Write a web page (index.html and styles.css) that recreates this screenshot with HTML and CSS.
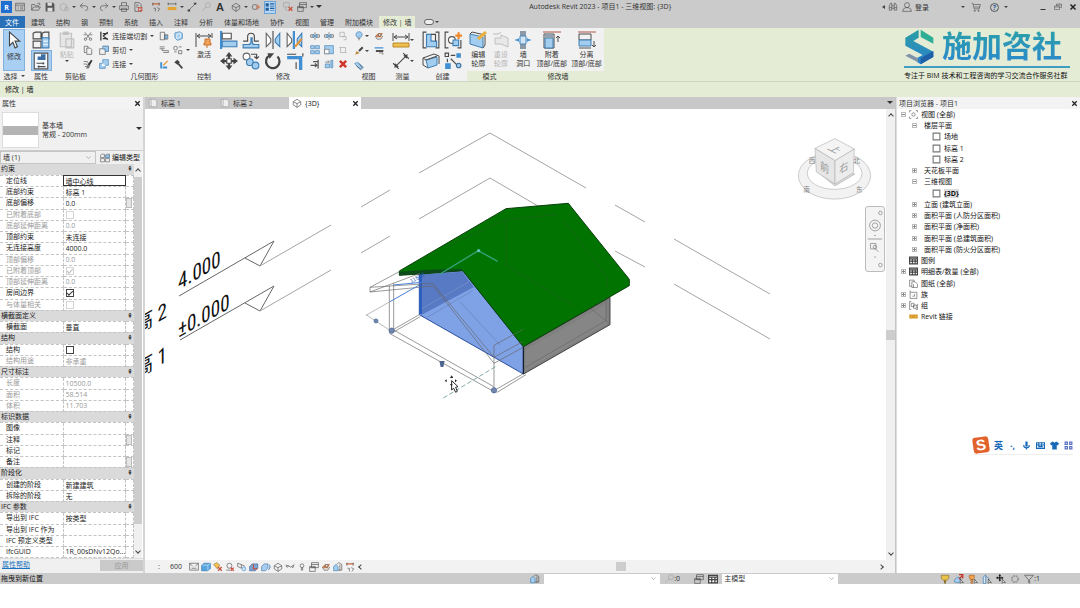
FILE: index.html
```html
<!DOCTYPE html>
<html lang="zh-CN">
<head>
  <meta charset="UTF-8">
  <meta name="viewport" content="width=device-width, initial-scale=1">
  <title>Autodesk Revit 2023 - 项目1 - 三维视图: {3D}</title>
  <link rel="stylesheet" href="styles.css">
</head>
<body>
  <!-- Набор иконок -->
  <svg class="sprite" aria-hidden="true">
    <defs>
      <linearGradient id="roofLogo" x1="0" y1="0" x2="0" y2="1">
        <stop offset="0" stop-color="#2b9fa5"/>
        <stop offset="1" stop-color="#2a80cc"/>
      </linearGradient>
    </defs>
    <symbol id="i-recent" viewBox="0 0 16 16"><path class="k" d="M1 2h14v12H1zM1 5h14M4 8h2M8 8h5M4 11h2M8 11h5"/></symbol>
    <symbol id="i-open" viewBox="0 0 16 16"><path class="k" d="M1 13V4h5l1 2h5v2M1 13l3-5h11l-3 5zM10 2h4v3"/></symbol>
    <symbol id="i-save" viewBox="0 0 16 16"><path fill="#555" d="M1 1h12l2 2v12H1z"/><path fill="#ddd" d="M4 1h7v5H4zM4 9h8v6H4z"/></symbol>
    <symbol id="i-sync" viewBox="0 0 16 16"><path class="g" d="M2 5l5-3 5 3v6l-5 3-5-3z"/><circle class="g" cx="12" cy="11" r="3"/></symbol>
    <symbol id="i-undo" viewBox="0 0 16 16"><path class="k" d="M6 2L2 6l4 4M2 6h8q4 0 4 4 0 3-4 4"/></symbol>
    <symbol id="i-redo" viewBox="0 0 16 16"><path class="k" d="M10 2l4 4-4 4M14 6H6q-4 0-4 4 0 3 4 4"/></symbol>
    <symbol id="i-print" viewBox="0 0 16 16"><path class="k" d="M4 6V1h8v5M1 6h14v6H1zM4 10h8v5H4z"/></symbol>
    <symbol id="i-pdf" viewBox="0 0 16 16"><path class="k" d="M3 1h7l3 3v11H3zM5 5h4M5 8h3"/><path fill="#c8503c" d="M8 8h7v7H8z"/><path stroke="#fff" d="M10 14v-4h3v2h-3"/></symbol>
    <symbol id="i-measure" viewBox="0 0 16 16"><path stroke="#c4643a" stroke-width="2" fill="none" d="M2 3h12"/><path class="k" d="M3 1v5M13 1v5M4 10h3v5M10 9l4 2-3 4"/></symbol>
    <symbol id="i-dim" viewBox="0 0 16 16"><path class="k" d="M1 3h14M2 1v4M14 1v4"/><path fill="#e5a535" d="M1 8h14v5H1z"/></symbol>
    <symbol id="i-line" viewBox="0 0 16 16"><path class="k" d="M3 13L13 3"/><path fill="#444" d="M1 12h4v3H1zM11 1h4v3h-4z"/></symbol>
    <symbol id="i-tag" viewBox="0 0 16 16"><circle class="g" cx="11" cy="5" r="4"/><path class="g" d="M8 8l-6 6"/></symbol>
    <symbol id="i-3d" viewBox="0 0 16 16"><path class="k" d="M2 6l6-4 6 4v5l-6 4-6-4zM2 6l6 3 6-3M8 9v6"/></symbol>
    <symbol id="i-sect" viewBox="0 0 16 16"><circle class="k" cx="6" cy="8" r="4"/><path fill="#c9846c" d="M9 3l6 5-6 5z"/></symbol>
    <symbol id="i-thin" viewBox="0 0 16 16"><path fill="#1e5fa0" d="M1 2h5v5H1zM1 9h5v5H1zM8 2h7v2H8zM8 6h7v1H8zM8 9h7v2H8zM8 13h7v1H8z"/></symbol>
    <symbol id="i-closewin" viewBox="0 0 16 16"><path class="g" d="M1 1h9v7H1zM4 8v5h5"/><path stroke="#c8503c" stroke-width="2" d="M9 8l6 6M15 8l-6 6"/></symbol>
    <symbol id="i-switch" viewBox="0 0 16 16"><path class="k" d="M4 1h11v8H4zM4 4h11M1 7h9v8H1zM1 9h9"/></symbol>
    <symbol id="i-bino" viewBox="0 0 16 16"><path class="k" d="M2 13V7l2-5h2v11zM14 13V7l-2-5h-2v11zM6 6h4M6 10h4M2 9h4M10 9h4"/></symbol>
    <symbol id="i-user" viewBox="0 0 16 16"><circle class="k" cx="8" cy="5" r="4"/><path class="k" d="M1 15q0-5 5-6h4q5 1 5 6z"/></symbol>
    <symbol id="i-cart" viewBox="0 0 16 16"><path class="k" d="M1 2h2l2 9h8l2-7H4M5 8h9"/><circle class="k" cx="6" cy="14" r="1"/><circle class="k" cx="12" cy="14" r="1"/></symbol>
    <symbol id="i-min" viewBox="0 0 16 16"><path stroke="#333" stroke-width="2" d="M3 13h10"/></symbol>
    <symbol id="i-restore" viewBox="0 0 16 16"><path class="k" d="M5 6V2h10v7h-4M1 6h10v7H1zM1 8h10M5 4h10"/></symbol>
    <symbol id="i-x" viewBox="0 0 16 16"><path stroke="#222" stroke-width="3" d="M3 3l10 10M13 3L3 13"/></symbol>
    <symbol id="i-arrow" viewBox="0 0 16 16"><path fill="#fff" stroke="#444" d="M4 1v12l3-3 2 5 2-1-2-5h4z"/></symbol>
    <symbol id="i-types" viewBox="0 0 16 16"><path class="k" d="M1 2l2-1h5v6H1zM9 2l2-1h4v6H9zM1 9h7v6H1z"/><path class="b" d="M9 6h6v9H9z"/><path stroke="#e9f3fb" d="M10 9h4M10 12h4"/></symbol>
    <symbol id="i-props" viewBox="0 0 16 16"><path fill="#f4f9fd" stroke="#555" d="M2 1h12v14H2z"/><path fill="#3d6fa5" d="M8 2h4v5H8zM5 4h3v3H5z"/><path class="k" d="M4 10h7M10 9v2M5 13h7M6 12v2"/></symbol>
    <symbol id="i-paste" viewBox="0 0 16 16"><path fill="#e6e6e6" stroke="#c2c2c2" d="M2 2h10v12H2zM5 1h4v2H5zM7 7h7v8H7z"/></symbol>
    <symbol id="i-cut" viewBox="0 0 16 16"><path class="k" d="M3 2l8 10M13 2L5 12M1 6h4M10 6h5"/><circle class="k" cx="4" cy="13" r="2"/><circle class="k" cx="12" cy="13" r="2"/></symbol>
    <symbol id="i-copyclip" viewBox="0 0 16 16"><path class="k" d="M2 2h6v3M2 2v10h3M6 5h6l2 2v8H6z"/></symbol>
    <symbol id="i-match" viewBox="0 0 16 16"><path class="k" d="M1 4h6l2 4M1 8h5l2 4M3 12h5"/><path stroke="#333" stroke-width="3" d="M14 2l-5 8"/><path fill="#777" d="M7 10h5l-3 5H5z"/></symbol>
    <symbol id="i-cope" viewBox="0 0 16 16"><path stroke="#333" stroke-width="2" fill="none" d="M3 1v14M6 4h8M6 12h8M14 2l-7 6 7 6"/></symbol>
    <symbol id="i-geocut" viewBox="0 0 16 16"><path class="k" fill="#fff" d="M1 6h9v9H1zM6 2h9v8h-5"/><path class="b" d="M6 2h9v8h-5V6H6z"/></symbol>
    <symbol id="i-join" viewBox="0 0 16 16"><path class="b" d="M1 7h5V1h9v9h-5v5H1z"/><path stroke="#fff" stroke-width="2" fill="none" d="M6 7v3h4"/></symbol>
    <symbol id="i-wallcut" viewBox="0 0 16 16"><path class="k" d="M2 2h7v12H2zM9 6h5v7H9z"/><path class="b" d="M10 7h3v5h-3z"/></symbol>
    <symbol id="i-beam" viewBox="0 0 16 16"><path class="k" d="M1 3h8M1 6h8M5 6v3h10v3M7 12h8"/></symbol>
    <symbol id="i-wallb" viewBox="0 0 16 16"><path fill="#3f8fd2" d="M2 5h3v10H2zM6 12h7v3H6z"/><path stroke="#e4953a" stroke-width="2" d="M7 10l7-7"/></symbol>
    <symbol id="i-box" viewBox="0 0 16 16"><path class="b" d="M3 3l8-2 4 3v8l-8 3-4-4z"/><path stroke="#fff" fill="none" d="M6 5l6-1v6l-6 2z"/></symbol>
    <symbol id="i-shapes" viewBox="0 0 16 16"><circle class="k" cx="4" cy="5" r="3"/><path class="k" d="M9 9h5v5H9zM2 11h4M9 3h5"/></symbol>
    <symbol id="i-hammer" viewBox="0 0 16 16"><path fill="#444" d="M2 5l5-4 4 4-4 4z"/><path stroke="#444" stroke-width="3" d="M8 7l7 8"/></symbol>
    <symbol id="i-activate" viewBox="0 0 18 16"><path class="k" d="M1 1v14M17 1v5M2 4h14M5 2L2 4l3 2M13 2l3 2-3 2"/><path fill="#f0a35a" stroke="#c9702a" d="M10 7h5v4h1v2h-7v-2h1zM12 13v3"/></symbol>
    <symbol id="i-align" viewBox="0 0 16 16"><path stroke="#3f8fd2" stroke-width="2" d="M1 0v16"/><path fill="#fff" stroke="#555" d="M2 2h8v5H2z"/><path class="b" d="M2 9h13v5H2z"/></symbol>
    <symbol id="i-offset" viewBox="0 0 16 16"><path class="k" d="M1 9h4V5q0-3 3-3t3 3v4h4"/><path class="b" d="M1 12h5q2 0 2-3V6h1v3q0 3 2 3h4v3H1z"/></symbol>
    <symbol id="i-mirror" viewBox="0 0 16 16"><path class="k" d="M8 0v16"/><path fill="#fff" stroke="#666" d="M2 2l4 5v3l-4 4z"/><path class="b" d="M14 2l-4 5v3l4 4z"/></symbol>
    <symbol id="i-mirror2" viewBox="0 0 16 16"><path stroke="#3f8fd2" stroke-width="2" d="M7 0v16"/><path fill="#fff" stroke="#666" d="M1 2l4 5v3l-4 4z"/><path class="b" d="M14 2l-4 5v3l4 4z"/><path stroke="#e4953a" stroke-width="2" d="M8 14l6-7"/></symbol>
    <symbol id="i-move" viewBox="0 0 16 16"><path stroke="#444" stroke-width="2" d="M8 3v10M3 8h10"/><path fill="#444" d="M8 0l3 4H5zM8 16l3-4H5zM0 8l4-3v6zM16 8l-4-3v6z"/><path fill="#fff" stroke="#444" d="M6 6h4v4H6z"/></symbol>
    <symbol id="i-copy" viewBox="0 0 16 16"><circle cx="4" cy="4" r="3" fill="#fff" stroke="#666"/><circle class="b" cx="7" cy="9" r="3"/><circle class="b" cx="12" cy="12" r="3"/><path class="k" d="M8 2h5v4M11 4l2 2 2-2"/></symbol>
    <symbol id="i-rotate" viewBox="0 0 16 16"><path stroke="#444" stroke-width="2" fill="none" d="M5 3a6 6 0 1 0 7 1"/><path fill="#444" d="M3 1l6 0-4 5z"/></symbol>
    <symbol id="i-trim" viewBox="0 0 16 16"><path stroke="#3f8fd2" stroke-width="3" fill="none" d="M1 5h12v11"/><path class="k" d="M1 2h8M9 9v6M15 1v3"/></symbol>
    <symbol id="i-split" viewBox="0 0 16 16"><path class="k" d="M1 6h4v4H1zM15 6h-4v4h4zM8 2v12"/><path class="b" d="M5 5l3 3-3 3zM11 5L8 8l3 3z"/></symbol>
    <symbol id="i-array" viewBox="0 0 16 16"><path class="b" d="M1 1h6v5H1zM9 1h6v5H9zM1 9h6v5H1zM9 9h6v5H9z"/></symbol>
    <symbol id="i-scale" viewBox="0 0 16 16"><path class="b" d="M1 1h14v13H1z"/><path fill="#fff" stroke="#666" d="M1 7h7v7H1z"/></symbol>
    <symbol id="i-ext" viewBox="0 0 16 16"><path stroke="#555" stroke-width="2" fill="none" d="M13 1v14M1 10h10M8 7l3 3-3 3M5 4h8"/></symbol>
    <symbol id="i-ext2" viewBox="0 0 16 16"><path class="b" d="M2 8h7v6H2zM11 2h3v12h-3z"/><path class="k" d="M2 5h7M6 2l3 3"/></symbol>
    <symbol id="i-pin" viewBox="0 0 16 16"><path class="g" d="M3 2h7v7H3zM7 9h6v5H9"/></symbol>
    <symbol id="i-unpin" viewBox="0 0 16 16"><path class="g" d="M4 4h8v8H4zM2 4h2M12 12h2"/></symbol>
    <symbol id="i-del" viewBox="0 0 16 16"><path stroke="#d2372c" stroke-width="4" d="M3 3l10 10M13 3L3 13"/></symbol>
    <symbol id="i-bulb" viewBox="0 0 16 16"><path class="b" d="M8 1a5 5 0 0 1 3 9H5a5 5 0 0 1 3-9z"/><path class="k" d="M6 12h4M7 14h2"/></symbol>
    <symbol id="i-brush" viewBox="0 0 16 16"><path stroke="#444" stroke-width="3" d="M14 2L8 8"/><path fill="#b98a3c" d="M2 14l2-6 5 3z"/></symbol>
    <symbol id="i-hide" viewBox="0 0 16 16"><path class="b" d="M1 4l5-2 9 8-5 4z"/><path class="k" d="M4 8l8 6M8 4l6 8"/></symbol>
    <symbol id="i-override" viewBox="0 0 16 16"><path fill="#c77b4a" d="M2 8l5-5h7l-3 7H5z"/><circle cx="9" cy="6" r="2" fill="#eee" stroke="#555"/><path class="k" d="M2 8l3 5h6l3-5"/></symbol>
    <symbol id="i-lw" viewBox="0 0 16 16"><path stroke="#3f8fd2" stroke-width="2" d="M1 3h14"/><path stroke="#444" stroke-width="3" d="M3 8h12"/><path class="k" d="M8 11h6v3"/></symbol>
    <symbol id="i-mdist" viewBox="0 0 18 16"><path class="k" d="M1 1v8M17 1v8M2 5h14M5 3L2 5l3 2M13 3l3 2-3 2"/><path fill="#f0c04c" stroke="#b98a2c" d="M1 11h16v4H1z"/></symbol>
    <symbol id="i-mline" viewBox="0 0 16 16"><path class="k" d="M3 13L13 3M1 10l5 5M10 1l5 5"/><path fill="#444" d="M2 14l1-4 3 3zM14 2l-4 1 3 3z"/></symbol>
    <symbol id="i-asm" viewBox="0 0 16 16"><path class="k" d="M4 1H1v14h3M12 1h3v14h-3"/><path class="b" d="M4 3h4v6h5v5H4z"/><path class="k" d="M8 3h4v6"/></symbol>
    <symbol id="i-group" viewBox="0 0 16 16"><path class="k" d="M4 1H1v14h3M12 15h3V8"/><circle cx="7" cy="8" r="3" fill="#fff" stroke="#555"/><path class="b" d="M8 8h5v5H8z"/><path stroke="#ee8a2c" stroke-width="2" d="M10 4h6M13 1v6"/></symbol>
    <symbol id="i-sim" viewBox="0 0 18 16"><path class="k" d="M1 5l11-4 5 2v8M1 5v7l5 3"/><path class="b" d="M4 7l11-3v8L6 15z"/><path class="k" d="M1 5l3 2 11-4"/></symbol>
    <symbol id="i-parts" viewBox="0 0 16 16"><path fill="#3f8fd2" d="M1 10h5v5H1zM11 1h4v4h-4z"/><circle cx="13" cy="12" r="2" fill="#9cc8ec" stroke="#3f6fa0"/><path class="k" d="M1 1h3v3H1zM6 3h4M3 6v3M6 6l5 5"/></symbol>
    <symbol id="i-profile" viewBox="0 0 18 18"><path class="b" d="M1 3l13 3v11L1 13z"/><path class="k" d="M1 3l2-2 13 3v10l-2 3"/><path stroke="#e8b13f" stroke-width="3" d="M9 8l8-7"/></symbol>
    <symbol id="i-reset" viewBox="0 0 18 18"><path fill="#e8e8e8" stroke="#c0c0c0" d="M3 7h6V4l7 3v9l-7-3H3zM1 3h6l2-2"/></symbol>
    <symbol id="i-opening" viewBox="0 0 16 18"><path fill="#8a9aa8" d="M5 0h6v5H5zM5 13h6v5H5z"/><path fill="#cfe4f5" stroke="#4d86b8" d="M5 5h6v8H5z"/><path stroke="#3f8fd2" d="M0 9h4M12 9h4"/><path fill="#3f8fd2" d="M1 9l3-2v4zM15 9l-3-2v4z"/></symbol>
    <symbol id="i-attach" viewBox="0 0 18 18"><path stroke="#b0554c" stroke-width="1" d="M0 1h18"/><path class="k" d="M1 3h10v14H1z"/><path class="b" d="M2 7h8v10H2z"/><path fill="#8fa0ae" d="M2 3h8v4H2z"/><path class="k" d="M15 11V5M13 7l2-2 2 2"/></symbol>
    <symbol id="i-detach" viewBox="0 0 18 18"><path stroke="#b0554c" stroke-width="1" d="M0 1h18"/><path class="k" d="M1 3h12v6H1z"/><path class="b" d="M1 9h12v6H1z"/><path stroke="#555" d="M1 17h12"/><path class="k" d="M16 10v6M14 14l2 2 2-2"/></symbol>
    <symbol id="i-sheet" viewBox="0 0 16 16"><path fill="#eee" stroke="#999" d="M2 2h9l3 3v9H2zM5 2v12"/></symbol>
    <symbol id="i-edittype" viewBox="0 0 18 16"><path class="k" d="M1 3l2-2h5v6H1zM10 3l2-2h5v6h-7zM1 9h7v6H1zM10 9h7v6h-7z"/><path class="b" d="M10 3h7v4h-7z"/></symbol>
    <symbol id="i-views" viewBox="0 0 16 16"><path class="k" d="M4 1H1v3M12 1h3v3M4 15H1v-3M12 15h3v-3"/><circle class="k" cx="8" cy="8" r="3"/></symbol>
    <symbol id="i-view" viewBox="0 0 16 16"><path fill="#fff" stroke="#777" stroke-width="2" d="M2 2h12v12H2z"/></symbol>
    <symbol id="i-table" viewBox="0 0 16 16"><path stroke="#444" stroke-width="2" fill="#fff" d="M1 2h14v12H1zM1 5h14M1 9h14M6 5v9M11 5v9"/></symbol>
    <symbol id="i-sheets" viewBox="0 0 16 16"><path class="k" d="M1 2h8v3M1 2v11h4M5 5h6l4 4v6H5zM8 9v6"/></symbol>
    <symbol id="i-family" viewBox="0 0 16 16"><path class="k" d="M2 1v14h12V4M2 4h12M6 11h4V7"/></symbol>
    <symbol id="i-groups" viewBox="0 0 16 16"><path class="k" d="M4 1H1v14h3M12 15h3V5M4 4h5v6H4zM8 7h5v6H8z"/></symbol>
    <symbol id="i-link" viewBox="0 0 16 16"><path stroke="#d79a2b" stroke-width="3" fill="#f6d88a" d="M2 6h5v4H2zM9 6h5v4H9z"/></symbol>
    <symbol id="i-detail" viewBox="0 0 16 16"><path class="k" d="M1 2h14v11H1zM1 2l5 5M15 2l-5 5M4 10h8"/></symbol>
    <symbol id="i-vstyle" viewBox="0 0 16 16"><path fill="#58a6e0" stroke="#2d6fa8" d="M1 5l4-3h10v8l-4 4H1z"/><path stroke="#cfe8fa" fill="none" d="M1 5h10v9M11 5l4-3"/></symbol>
    <symbol id="i-sun" viewBox="0 0 16 16"><path fill="#f3c14c" stroke="#8a7a4a" d="M1 4l5-3 5 4-4 6z"/><path stroke="#c8503c" stroke-width="2" d="M8 8l6 6M14 8l-6 6"/></symbol>
    <symbol id="i-shadow" viewBox="0 0 16 16"><circle class="k" cx="7" cy="6" r="4"/><path class="k" d="M2 13h6"/><path stroke="#c8503c" stroke-width="2" d="M9 9l5 5M14 9l-5 5"/></symbol>
    <symbol id="i-crop" viewBox="0 0 16 16"><path class="k" d="M1 2l6 2v6l-6-3zM7 4l6 3"/><circle cx="11" cy="11" r="3" fill="#cfe4f5" stroke="#3f8fd2"/></symbol>
    <symbol id="i-crop2" viewBox="0 0 16 16"><path fill="#7aa5d8" stroke="#3b5f92" d="M1 7l4-4h9v7l-4 4H1z"/><path fill="none" stroke="#c8503c" stroke-width="2" d="M7 4v7h6"/></symbol>
    <symbol id="i-crop3" viewBox="0 0 16 16"><path fill="#a8cdf0" stroke="#3b6fa8" d="M1 7l4-4h6v7l-4 4H1zM13 4l2 4-3 5"/></symbol>
    <symbol id="i-glasses" viewBox="0 0 16 16"><path class="k" d="M1 5l5 1q2 4 5 1l4-3M6 6q-3 5-4 0M11 7q2 5 3-2"/></symbol>
    <symbol id="i-bulb2" viewBox="0 0 16 16"><circle class="k" cx="8" cy="6" r="3"/><path class="k" d="M7 9v4h2V9"/></symbol>
    <symbol id="i-worker" viewBox="0 0 16 16"><path fill="#e8c24a" stroke="#8a6d20" d="M2 2h12v5l-3 3H5L2 7z"/><path stroke="#8a6d20" stroke-width="3" d="M8 10v5"/></symbol>
    <symbol id="i-sel1" viewBox="0 0 16 16"><path class="b" d="M1 9l5-4 5 1v6l-5 2-5-1z"/><path stroke="#c8372c" stroke-width="2" fill="none" d="M8 1h6v6M14 2L8 8"/><path fill="#fff" stroke="#333" d="M10 8v7l2-2 3 1z"/></symbol>
    <symbol id="i-sel2" viewBox="0 0 16 16"><path fill="#f2a14c" stroke="#a85f20" d="M2 2h8v4l-2 3H4L2 6zM5 9h2v6H5z"/><path fill="#fff" stroke="#333" d="M10 8v7l2-2 3 1z"/></symbol>
    <symbol id="i-sel3" viewBox="0 0 16 16"><path fill="#d4e7f7" stroke="#2f6fa8" d="M2 5l4-4v14H2zM6 4l5 3v5"/><path fill="#fff" stroke="#333" d="M10 8v7l2-2 3 1z"/></symbol>
    <symbol id="i-sel4" viewBox="0 0 16 16"><path stroke="#222" stroke-width="2" d="M6 1v10M1 6h10"/><path fill="#222" d="M6 0l2 3H4zM6 12l2-3H4zM0 6l3-2v4zM12 6L9 4v4z"/><path fill="#fff" stroke="#333" d="M10 8v7l2-2 3 1z"/></symbol>
    <symbol id="i-gear" viewBox="0 0 16 16"><circle cx="8" cy="8" r="5" fill="none" stroke="#999" stroke-width="3" stroke-dasharray="3 1"/></symbol>
    <symbol id="i-filter" viewBox="0 0 16 16"><path class="k" d="M1 2h14L9 9v6l-2-2V9z"/></symbol>
    <symbol id="i-workset" viewBox="0 0 16 16"><path class="b" d="M1 7l4-3 3 3v7H1z"/><path class="k" d="M6 4l3-3 5 3v9H8M11 4v10"/></symbol>
    <symbol id="i-mic" viewBox="0 0 16 16"><path fill="#1668b8" d="M6 1h4v9H6z"/><path stroke="#1668b8" stroke-width="2" fill="none" d="M3 7q0 5 5 5t5-5M8 12v3"/></symbol>
    <symbol id="i-kbd" viewBox="0 0 16 16"><path stroke="#1668b8" stroke-width="2" fill="#fff" d="M1 3h14v10H1zM1 7h14M5 3v7M10 3v7M4 10h8"/></symbol>
    <symbol id="i-shirt" viewBox="0 0 16 16"><path fill="#1668b8" d="M0 4l5-3 3 2 3-2 5 3-2 4-2-1v8H4V7L2 8z"/></symbol>
    <symbol id="i-apps" viewBox="0 0 16 16"><path fill="#fff" stroke="#5a6fc4" stroke-width="2" d="M2 2h4v4H2zM10 2h4v4h-4zM2 10h4v4H2zM10 10h4v4h-4z"/></symbol>
  </svg>

  <div class="app">
    <!-- Панель быстрого доступа -->
    <header class="titlebar">
      <div class="qat">
        <button class="logo-r" aria-label="Revit">R</button>
        <button class="ic" aria-label="主页"><svg><use href="#i-recent"/></svg></button>
        <button class="ic gap-s" aria-label="打开"><svg><use href="#i-open"/></svg></button>
        <button class="ic" aria-label="保存"><svg><use href="#i-save"/></svg></button>
        <button class="ic" aria-label="同步"><svg><use href="#i-sync"/></svg></button>
        <i class="car"></i>
        <button class="ic" aria-label="放弃"><svg><use href="#i-undo"/></svg></button>
        <i class="car"></i>
        <button class="ic" aria-label="重做"><svg><use href="#i-redo"/></svg></button>
        <i class="car"></i>
        <button class="ic" aria-label="打印"><svg><use href="#i-print"/></svg></button>
        <button class="ic" aria-label="PDF"><svg><use href="#i-pdf"/></svg></button>
        <button class="ic gap-m" aria-label="测量"><svg><use href="#i-measure"/></svg></button>
        <button class="ic gap-s" aria-label="尺寸标注"><svg><use href="#i-dim"/></svg></button>
        <i class="car"></i>
        <button class="ic" aria-label="详图线"><svg><use href="#i-line"/></svg></button>
        <button class="ic" aria-label="标记"><svg><use href="#i-tag"/></svg></button>
        <button class="ic letter" aria-label="文字">A</button>
        <button class="ic gap-s" aria-label="三维视图"><svg><use href="#i-3d"/></svg></button>
        <i class="car"></i>
        <button class="ic" aria-label="剖面"><svg><use href="#i-sect"/></svg></button>
        <button class="ic on" aria-label="细线"><svg><use href="#i-thin"/></svg></button>
        <button class="ic gap-m" aria-label="关闭非活动视图"><svg><use href="#i-closewin"/></svg></button>
        <button class="ic" aria-label="切换窗口"><svg><use href="#i-switch"/></svg></button>
        <i class="car"></i>
        <i class="car big"></i>
      </div>
      <div class="caption">Autodesk Revit 2023 - 项目1 - 三维视图: {3D}</div>
      <div class="account">
        <i class="car left"></i>
        <button class="ic" aria-label="搜索"><svg><use href="#i-bino"/></svg></button>
        <button class="ic" aria-label="用户"><svg><use href="#i-user"/></svg></button>
        <button class="login">登录</button>
        <i class="car"></i>
        <button class="ic" aria-label="商店"><svg><use href="#i-cart"/></svg></button>
        <button class="help" aria-label="帮助">?</button>
        <i class="car"></i>
      </div>
      <div class="winbtns">
        <button class="ic" aria-label="最小化"><svg><use href="#i-min"/></svg></button>
        <button class="ic" aria-label="还原"><svg><use href="#i-restore"/></svg></button>
        <button class="ic" aria-label="关闭"><svg><use href="#i-x"/></svg></button>
      </div>
    </header>

    <nav class="menu">
      <button class="file">文件</button>
      <button>建筑</button>
      <button>结构</button>
      <button>钢</button>
      <button>预制</button>
      <button>系统</button>
      <button>插入</button>
      <button>注释</button>
      <button>分析</button>
      <button>体量和场地</button>
      <button>协作</button>
      <button>视图</button>
      <button>管理</button>
      <button>附加模块</button>
      <button class="active">修改 | 墙</button>
      <button class="pill" aria-label="最小化功能区"></button>
      <i class="car"></i>
    </nav>

    <!-- Лента -->
    <section class="ribbon">
      <div class="panel p-select">
        <div class="tools"><button class="big on tall"><svg class="l"><use href="#i-arrow"/></svg><span>修改</span></button></div>
        <div class="pname">选择 <i class="car"></i></div>
      </div>
      <div class="panel p-props">
        <div class="tools g2">
          <button aria-label="类型属性"><svg class="l"><use href="#i-types"/></svg></button>
          <button class="on" aria-label="属性"><svg class="l"><use href="#i-props"/></svg></button>
        </div>
        <div class="pname">属性</div>
      </div>
      <div class="panel p-clip">
        <div class="tools">
          <button class="big off"><svg class="l"><use href="#i-paste"/></svg><span>粘贴</span><i class="car"></i></button>
          <div class="g3">
            <button aria-label="剪切到剪贴板"><svg class="s"><use href="#i-cut"/></svg></button>
            <button aria-label="复制到剪贴板"><svg class="s"><use href="#i-copyclip"/></svg></button>
            <button aria-label="匹配类型"><svg class="s"><use href="#i-match"/></svg></button>
          </div>
        </div>
        <div class="pname">剪贴板</div>
      </div>
      <div class="panel p-geo">
        <div class="tools">
          <div class="g3">
            <button><svg class="s"><use href="#i-cope"/></svg>连接端切割<i class="car"></i></button>
            <button><svg class="s"><use href="#i-geocut"/></svg>剪切<i class="car"></i></button>
            <button><svg class="s"><use href="#i-join"/></svg>连接<i class="car"></i></button>
          </div>
          <div class="g3">
            <button aria-label="墙连接"><svg class="s"><use href="#i-wallcut"/></svg></button>
            <button aria-label="梁连接"><svg class="s"><use href="#i-beam"/></svg></button>
            <button aria-label="填色"><svg class="s"><use href="#i-wallb"/></svg></button>
            <button aria-label="拆分面"><svg class="s"><use href="#i-box"/></svg></button>
            <button aria-label="形状"><svg class="s"><use href="#i-shapes"/></svg><i class="car"></i></button>
            <button aria-label="拆除"><svg class="s"><use href="#i-hammer"/></svg></button>
          </div>
        </div>
        <div class="pname">几何图形</div>
      </div>
      <div class="panel p-ctrl">
        <div class="tools"><button class="big"><svg class="l"><use href="#i-activate"/></svg><span>激活</span></button></div>
        <div class="pname">控制</div>
      </div>
      <div class="panel p-modify">
        <div class="tools">
          <div class="g2 wide">
            <button aria-label="对齐"><svg class="l"><use href="#i-align"/></svg></button>
            <button aria-label="移动"><svg class="l"><use href="#i-move"/></svg></button>
            <button aria-label="偏移"><svg class="l"><use href="#i-offset"/></svg></button>
            <button aria-label="复制"><svg class="l"><use href="#i-copy"/></svg></button>
            <button aria-label="镜像拾取轴"><svg class="l"><use href="#i-mirror"/></svg></button>
            <button aria-label="旋转"><svg class="l"><use href="#i-rotate"/></svg></button>
            <button aria-label="镜像绘制轴"><svg class="l"><use href="#i-mirror2"/></svg></button>
            <button aria-label="修剪"><svg class="l"><use href="#i-trim"/></svg></button>
          </div>
          <div class="g3 wide">
            <button aria-label="拆分图元"><svg class="s"><use href="#i-split"/></svg></button>
            <button aria-label="阵列"><svg class="s"><use href="#i-array"/></svg></button>
            <button aria-label="延伸单个"><svg class="s"><use href="#i-ext"/></svg></button>
            <button aria-label="用间隙拆分"><svg class="s"><use href="#i-split"/></svg></button>
            <button aria-label="缩放"><svg class="s"><use href="#i-scale"/></svg></button>
            <button aria-label="延伸多个"><svg class="s"><use href="#i-ext2"/></svg></button>
            <button aria-label="解锁"><svg class="s"><use href="#i-pin"/></svg></button>
            <button aria-label="锁定"><svg class="s"><use href="#i-unpin"/></svg></button>
            <button aria-label="删除"><svg class="s"><use href="#i-del"/></svg></button>
          </div>
        </div>
        <div class="pname">修改</div>
      </div>
      <div class="panel p-view">
        <div class="tools">
          <div class="g3 wide">
            <button aria-label="隐藏"><svg class="s"><use href="#i-bulb"/></svg><i class="car"></i></button>
            <button aria-label="替换"><svg class="s"><use href="#i-brush"/></svg><i class="car"></i></button>
            <button aria-label="选择框"><svg class="s"><use href="#i-hide"/></svg></button>
            <button aria-label="置换"><svg class="s"><use href="#i-override"/></svg></button>
            <button aria-label="线处理"><svg class="s"><use href="#i-lw"/></svg></button>
          </div>
        </div>
        <div class="pname">视图</div>
      </div>
      <div class="panel p-measure">
        <div class="tools g2">
          <button aria-label="测量"><svg class="l"><use href="#i-mdist"/></svg><i class="car"></i></button>
          <button aria-label="对齐标注"><svg class="l"><use href="#i-mline"/></svg><i class="car"></i></button>
        </div>
        <div class="pname">测量</div>
      </div>
      <div class="panel p-create">
        <div class="tools g2 wide">
          <button aria-label="创建部件"><svg class="l"><use href="#i-asm"/></svg></button>
          <button aria-label="创建类似"><svg class="l"><use href="#i-sim"/></svg></button>
          <button aria-label="创建组"><svg class="l"><use href="#i-group"/></svg></button>
          <button aria-label="创建零件"><svg class="l"><use href="#i-parts"/></svg></button>
        </div>
        <div class="pname">创建</div>
      </div>
      <div class="panel p-mode ctx">
        <div class="tools">
          <button class="big"><svg class="l"><use href="#i-profile"/></svg><span>编辑<br>轮廓</span></button>
          <button class="big off"><svg class="l"><use href="#i-reset"/></svg><span>重设<br>轮廓</span></button>
        </div>
        <div class="pname">模式</div>
      </div>
      <div class="panel p-wall ctx">
        <div class="tools">
          <button class="big"><svg class="l"><use href="#i-opening"/></svg><span>墙<br>洞口</span></button>
          <button class="big"><svg class="l"><use href="#i-attach"/></svg><span>附着<br>顶部/底部</span></button>
          <button class="big"><svg class="l"><use href="#i-detach"/></svg><span>分离<br>顶部/底部</span></button>
        </div>
        <div class="pname">修改墙</div>
      </div>
      <div class="brand">
        <div class="brand-top">
          <svg class="brand-mark" viewBox="0 0 90 108">
            <path fill="url(#roofLogo)" d="M44 2v24L28 36l60 32v16L50 106l-10-6V86l16-8L4 50V26z"/>
            <path fill="#2fae96" d="M50 2l38 24v18L50 24z"/>
            <path fill="#1f5fa8" d="M50 88l38-22v18l-38 22z"/>
            <path fill="#7f93a8" d="M4 80l12-6 26 14v12z"/>
          </svg>
          <span>施加咨社</span>
        </div>
        <p>专注于 BIM 技术和工程咨询的学习交流合作服务社群</p>
      </div>
    </section>

    <div class="options">修改 | 墙</div>

    <div class="work">
      <!-- Свойства -->
      <aside class="props">
        <div class="phead">属性<button class="x" aria-label="关闭属性"><svg><use href="#i-x"/></svg></button></div>
        <button class="type">
          <span class="thumb"></span>
          <span class="tname">基本墙<br>常规 - 200mm</span>
          <i class="car big"></i>
        </button>
        <div class="inst">
          <select aria-label="图元"><option>墙 (1)</option></select>
          <button><svg><use href="#i-edittype"/></svg>编辑类型</button>
        </div>
        <div class="grid-wrap">
          <table>
            <colgroup><col class="c1"><col><col class="c3"></colgroup>
            <tbody>
              <tr class="sec"><th colspan="2">约束</th><td>⇞</td></tr>
              <tr><th><label for="p1">定位线</label></th><td><input class="focus" id="p1" value="墙中心线"></td><td></td></tr>
              <tr><th><label for="p2">底部约束</label></th><td><input id="p2" value="标高 1"></td><td></td></tr>
              <tr><th><label for="p3">底部偏移</label></th><td><input id="p3" value="0.0"></td><td><button aria-label="关联底部偏移"></button></td></tr>
              <tr class="dis"><th><label for="p4">已附着底部</label></th><td><input type="checkbox" id="p4" disabled></td><td></td></tr>
              <tr class="dis"><th><label for="p5">底部延伸距离</label></th><td><input id="p5" value="0.0" disabled></td><td></td></tr>
              <tr><th><label for="p6">顶部约束</label></th><td><input id="p6" value="未连接"></td><td></td></tr>
              <tr><th><label for="p7">无连接高度</label></th><td><input id="p7" value="4000.0"></td><td></td></tr>
              <tr class="dis"><th><label for="p8">顶部偏移</label></th><td><input id="p8" value="0.0" disabled></td><td></td></tr>
              <tr class="dis"><th><label for="p9">已附着顶部</label></th><td><input type="checkbox" id="p9" checked disabled></td><td></td></tr>
              <tr class="dis"><th><label for="p10">顶部延伸距离</label></th><td><input id="p10" value="0.0" disabled></td><td></td></tr>
              <tr><th><label for="p11">房间边界</label></th><td><input type="checkbox" id="p11" checked></td><td></td></tr>
              <tr class="dis"><th><label for="p12">与体量相关</label></th><td><input type="checkbox" id="p12" disabled></td><td></td></tr>
              <tr class="sec"><th colspan="2">横截面定义</th><td>⇞</td></tr>
              <tr><th><label for="p13">横截面</label></th><td><input id="p13" value="垂直"></td><td></td></tr>
              <tr class="sec"><th colspan="2">结构</th><td>⇞</td></tr>
              <tr><th><label for="p14">结构</label></th><td><input type="checkbox" id="p14"></td><td></td></tr>
              <tr class="dis"><th><label for="p15">结构用途</label></th><td><input id="p15" value="非承重" disabled></td><td></td></tr>
              <tr class="sec"><th colspan="2">尺寸标注</th><td>⇞</td></tr>
              <tr class="dis"><th><label for="p16">长度</label></th><td><input id="p16" value="10500.0" disabled></td><td></td></tr>
              <tr class="dis"><th><label for="p17">面积</label></th><td><input id="p17" value="58.514" disabled></td><td></td></tr>
              <tr class="dis"><th><label for="p18">体积</label></th><td><input id="p18" value="11.703" disabled></td><td></td></tr>
              <tr class="sec"><th colspan="2">标识数据</th><td>⇞</td></tr>
              <tr><th><label for="p19">图像</label></th><td><input id="p19"></td><td></td></tr>
              <tr><th><label for="p20">注释</label></th><td><input id="p20"></td><td><button aria-label="关联注释"></button></td></tr>
              <tr><th><label for="p21">标记</label></th><td><input id="p21"></td><td></td></tr>
              <tr><th><label for="p22">备注</label></th><td><input id="p22"></td><td><button aria-label="关联备注"></button></td></tr>
              <tr class="sec"><th colspan="2">阶段化</th><td>⇞</td></tr>
              <tr><th><label for="p23">创建的阶段</label></th><td><input id="p23" value="新建建筑"></td><td></td></tr>
              <tr><th><label for="p24">拆除的阶段</label></th><td><input id="p24" value="无"></td><td></td></tr>
              <tr class="sec"><th colspan="2">IFC 参数</th><td>⇞</td></tr>
              <tr><th><label for="p25">导出到 IFC</label></th><td><input id="p25" value="按类型"></td><td></td></tr>
              <tr><th><label for="p26">导出到 IFC 作为</label></th><td><input id="p26"></td><td></td></tr>
              <tr><th><label for="p27">IFC 预定义类型</label></th><td><input id="p27"></td><td></td></tr>
              <tr><th><label for="p28">IfcGUID</label></th><td><input id="p28" value="1R_00sDNv12Qo..."></td><td></td></tr>
            </tbody>
          </table>
          <div class="vbar"><i class="chev up"></i><b></b><i class="chev down"></i></div>
        </div>
        <div class="pfoot"><a href="#">属性帮助</a><button disabled>应用</button></div>
      </aside>

      <!-- Вид -->
      <main class="doc">
        <div class="tabs">
          <button><svg><use href="#i-sheet"/></svg>标高 1</button>
          <button><svg><use href="#i-sheet"/></svg>标高 2</button>
          <button class="active"><svg><use href="#i-3d"/></svg>{3D}<svg class="close"><use href="#i-x"/></svg></button>
          <i class="car big"></i>
        </div>
        <div class="canvas">
          <svg class="scene" viewBox="145 109 741 451">
            <g class="thin">
              <path d="M419 173L490 133l96 55M419 219l71-41 48 28M361 207l29-17M361 253l29-17M615 205l30 17M615 251l30 16M674 239l96 55M674 284l96 55"/>
              <path class="lvl" d="M179 296l95-55-14 25-15-8M180 340l94-54-14 25-15-8"/>
              <path d="M260 266l71-41M260 311l71-41"/>
            </g>
            <g class="levels">
              <text transform="matrix(.866 -.5 0 1 178 290)">4.000</text>
              <text transform="matrix(.866 -.5 0 1 178 338)">±0.000</text>
              <text transform="matrix(.866 -.5 0 1 167 317)" text-anchor="end">高 2</text>
              <text transform="matrix(.866 -.5 0 1 167 361)" text-anchor="end">高 1</text>
            </g>
            <!-- дом, координаты в масштабе 3:1 -->
            <g transform="translate(350 120) scale(.3333)">
              <path fill="#808080" stroke="#444" stroke-width="3" d="M521 680l259-148v82L521 762z"/>
              <path fill="#868686" d="M526 752l242-140v-60L526 690z"/>
              <path class="h" d="M768 540v62l12 12M768 602L526 742M722 566l46 36"/>
              <path fill="#7fa2e6" stroke="#2a4f9e" stroke-width="3" d="M208 460l130-8 182 228v82L208 584z"/>
              <path fill="#5879c4" d="M214 463l122-8 36 46-158 84z"/>
              <path stroke="#2d5fc0" stroke-width="8" d="M212 462v120"/>
              <path stroke="#6f8cc8" stroke-width="3" fill="none" d="M216 566l150-86M232 592l136-80M330 545l120 130"/>
              <path fill="#007300" stroke="#0c3f0c" stroke-width="3" d="M148 453l320-187 187-16 183 228v19L520 680 338 452l-126 10-64 4z"/>
              <path fill="#0d4a1a" d="M148 455v11l64-4 126-10-4-5-100 2z"/>
              <path stroke="#146614" stroke-width="3" fill="none" d="M468 296v140l200 120M290 380l178-82 155-14M640 300l130 170v30"/>
              <path stroke="#37a47c" stroke-width="4" fill="none" d="M270 462l115-70 58 32"/>
              <circle cx="386" cy="392" r="5" fill="#5fc0c0"/>
              <path class="h" d="M148 455L60 502v14l190-18 182 232M60 502l188-12 184 222M60 516l150-56M118 497v130M131 490v138M124 632l84-48M131 636l80-46M118 640l314 175M131 630l300 170M432 676v136M432 676l88-48M432 712l88-48M432 730l88-48M432 812l90-52M440 818l88-54"/>
              <path stroke="#4a7fd6" stroke-width="3" fill="none" d="M131 495l84-8M120 545l88-50"/>
              <path stroke="#7fa8a8" stroke-width="3" stroke-dasharray="14 7" fill="none" d="M280 834l160-96"/>
              <path stroke="#999" stroke-width="2" d="M48 586l72-41M48 584l70 46"/>
              <path fill="#111" stroke="#111" stroke-width="3" d="M520 680v82"/>
              <circle class="grip" cx="78" cy="603" r="6"/>
              <circle class="grip" cx="125" cy="632" r="8"/>
              <circle class="grip" cx="432" cy="811" r="8"/>
              <path fill="#4e6590" d="M268 723h16l-4 18h-8z"/>
              <text class="len" transform="translate(184 490) rotate(-28)">11557</text>
              <!-- курсор -->
              <path fill="#fff" stroke="#222" stroke-width="3" d="M305 782v28l6-5 6 12 5-3-5-12 7-2z"/>
              <path fill="#222" d="M300 774h10l-5-8zM290 778v9l-6-5zM315 778v9l6-5zM300 792h8l-4 6z"/>
            </g>
            <!-- видовой куб -->
            <g class="cube" transform="translate(790 100) scale(.3333)">
              <path fill="#f2f2f2" fill-rule="evenodd" d="M25 227a108 70 0 1 0 217 0a108 70 0 1 0-217 0zM52 220a82 48 0 1 0 164 0a82 48 0 1 0-164 0z"/>
              <path fill="#d8d8d8" stroke="none" d="M90 222l45 36 60-36-60-14z"/>
              <path fill="#f4f4f4" d="M75 145l60-29 58 31-58 35z"/>
              <path fill="#e6e6e6" d="M75 145l60 37v70l-56-36z"/>
              <path fill="#ececec" d="M193 147l-3 71-55 34v-70z"/>
              <text transform="matrix(.9 .45 -.9 .45 110 146)">上</text>
              <text transform="matrix(.86 .5 0 1 90 206)">前</text>
              <text transform="matrix(.86 -.5 0 1 148 222)">右</text>
              <text class="dir" x="56" y="188">西</text>
              <text class="dir" x="190" y="188">北</text>
              <text class="dir" x="40" y="276">南</text>
              <text class="dir" x="198" y="276">东</text>
            </g>
          </svg>
          <div class="navbar">
            <svg viewBox="0 0 20 66">
              <circle cx="16" cy="4" r="2"/>
              <circle cx="10" cy="18" r="6"/>
              <circle cx="10" cy="18" r="3"/>
              <path d="M9 29h2M2 33h16M5 38h6v6H5zM9 43l5 4M9 53h2"/>
              <circle cx="10" cy="42" r="2"/>
              <circle cx="16" cy="62" r="2"/>
            </svg>
          </div>
          <div class="vbar main"><i class="chev up"></i><b></b><i class="chev down"></i></div>
        </div>
        <div class="viewbar">
          <span class="scale">:</span><span>600</span>
          <div class="vicons">
            <button aria-label="详细程度"><svg><use href="#i-detail"/></svg></button>
            <button aria-label="视觉样式"><svg><use href="#i-vstyle"/></svg></button>
            <button aria-label="日光路径"><svg><use href="#i-sun"/></svg></button>
            <button aria-label="阴影"><svg><use href="#i-shadow"/></svg></button>
            <button aria-label="渲染"><svg><use href="#i-crop"/></svg></button>
            <button aria-label="裁剪视图"><svg><use href="#i-crop2"/></svg></button>
            <button aria-label="裁剪区域"><svg><use href="#i-crop3"/></svg></button>
            <button aria-label="锁定视图"><svg><use href="#i-3d"/></svg></button>
            <button aria-label="临时隐藏"><svg><use href="#i-glasses"/></svg></button>
            <button aria-label="显示隐藏"><svg><use href="#i-bulb2"/></svg></button>
            <button aria-label="临时视图"><svg><use href="#i-switch"/></svg></button>
            <button aria-label="分析模型"><svg><use href="#i-override"/></svg></button>
            <button aria-label="置换集"><svg><use href="#i-workset"/></svg></button>
            <button aria-label="约束"><svg><use href="#i-measure"/></svg></button>
          </div>
          <i class="chev left"></i>
          <div class="hbar"><b></b></div>
          <i class="chev right"></i>
        </div>
      </main>

      <!-- Диспетчер проекта -->
      <aside class="browser">
        <div class="phead">项目浏览器 - 项目1<button class="x" aria-label="关闭浏览器"><svg><use href="#i-x"/></svg></button></div>
        <ul class="tree">
          <li><i class="ex m"></i><svg><use href="#i-views"/></svg>视图 (全部)</li>
          <li class="l1"><i class="ex m"></i>楼层平面</li>
          <li class="l2"><svg><use href="#i-view"/></svg>场地</li>
          <li class="l2"><svg><use href="#i-view"/></svg>标高 1</li>
          <li class="l2"><svg><use href="#i-view"/></svg>标高 2</li>
          <li class="l1"><i class="ex"></i>天花板平面</li>
          <li class="l1"><i class="ex m"></i>三维视图</li>
          <li class="l2"><svg><use href="#i-view"/></svg><b>{3D}</b></li>
          <li class="l1"><i class="ex"></i>立面 (建筑立面)</li>
          <li class="l1"><i class="ex"></i>面积平面 (人防分区面积)</li>
          <li class="l1"><i class="ex"></i>面积平面 (净面积)</li>
          <li class="l1"><i class="ex"></i>面积平面 (总建筑面积)</li>
          <li class="l1"><i class="ex"></i>面积平面 (防火分区面积)</li>
          <li><i class="ex none"></i><svg><use href="#i-table"/></svg>图例</li>
          <li><i class="ex"></i><svg><use href="#i-table"/></svg>明细表/数量 (全部)</li>
          <li><i class="ex none"></i><svg><use href="#i-sheets"/></svg>图纸 (全部)</li>
          <li><i class="ex"></i><svg><use href="#i-family"/></svg>族</li>
          <li><i class="ex"></i><svg><use href="#i-groups"/></svg>组</li>
          <li><i class="ex none"></i><svg><use href="#i-link"/></svg>Revit 链接</li>
        </ul>
        <div class="ime">
          <span class="sogou">S</span>
          <button>英</button>
          <button>·,</button>
          <button aria-label="语音"><svg><use href="#i-mic"/></svg></button>
          <button aria-label="键盘"><svg><use href="#i-kbd"/></svg></button>
          <button aria-label="皮肤"><svg><use href="#i-shirt"/></svg></button>
          <button aria-label="工具箱"><svg><use href="#i-apps"/></svg></button>
        </div>
      </aside>
    </div>

    <footer class="status">
      <span class="hint">拖曳到新位置</span>
      <svg><use href="#i-workset"/></svg>
      <select aria-label="工作集"><option></option></select>
      <span class="zero"><svg><use href="#i-tag"/></svg>:0</span>
      <svg><use href="#i-switch"/></svg>
      <svg><use href="#i-table"/></svg>
      <select class="model" aria-label="设计选项"><option>主模型</option></select>
      <div class="sicons">
        <button aria-label="工作共享"><svg><use href="#i-worker"/></svg></button>
        <button aria-label="选择链接"><svg><use href="#i-sel1"/></svg></button>
        <button aria-label="选择基线"><svg><use href="#i-sel2"/></svg></button>
        <button aria-label="选择锁定"><svg><use href="#i-sel3"/></svg></button>
        <button aria-label="拖曳图元"><svg><use href="#i-sel4"/></svg></button>
        <button aria-label="后台进程"><svg><use href="#i-gear"/></svg></button>
        <button aria-label="过滤器"><svg><use href="#i-filter"/></svg>:1</button>
      </div>
    </footer>
  </div>
</body>
</html>
```

FILE: styles.css
```css
* {
  box-sizing: border-box;
}
body {
  margin: 0;
  background: #fff;
  color: #333;
  font: 7px/9px "Open Sans", "Noto Sans CJK SC", sans-serif;
}
button, input, select {
  margin: 0;
  padding: 0;
  border: 0;
  background: none;
  color: inherit;
  font: inherit;
}
button {
  display: flex;
  align-items: center;
  white-space: nowrap;
}
svg {
  display: block;
  flex: none;
  width: 10px;
  height: 10px;
}
.sprite {
  position: absolute;
  width: 0;
  height: 0;
}
.k {
  fill: none;
  stroke: #4a4a4a;
}
.g {
  fill: none;
  stroke: #a0a0a0;
}
.b {
  fill: #a3cdee;
  stroke: #3f7fb5;
}
.app {
  display: flex;
  flex-direction: column;
  min-height: 100vh;
  padding-bottom: 24px;
}

/* маленькие треугольники */
.car {
  flex: none;
  width: 4px;
  height: 2px;
  border: solid transparent;
  border-width: 2px 2px 0;
  border-top-color: #444;
}
.car.big {
  width: 6px;
  height: 3px;
  border-width: 3px 3px 0;
  border-top-color: #333;
}
.car.left {
  width: 3px;
  height: 4px;
  border-width: 2px 3px 2px 0;
  border-color: transparent #444;
}
.chev {
  flex: none;
  width: 4px;
  height: 4px;
  border: solid #444;
  border-width: 1px 0 0 1px;
  transform: rotate(45deg);
}
.chev.down {
  transform: rotate(225deg);
}
.chev.left {
  transform: rotate(-45deg);
}
.chev.right {
  transform: rotate(135deg);
}

/* заголовок */
.titlebar {
  display: flex;
  align-items: center;
  height: 16px;
  padding-bottom: 2px;
  background: #cbcbcb;
}
.qat {
  display: flex;
  align-items: center;
  gap: 2px;
  flex: 0 0 49%;
}
.ic {
  justify-content: center;
  width: 12px;
  height: 13px;
}
.ic.on {
  background: #b5d5f2;
  outline: 1px solid #6ba3d6;
  outline-offset: -1px;
}
.gap-s {
  margin-left: 2px;
}
.gap-m {
  margin-left: 4px;
}
.letter {
  font: bold 11px/12px "Liberation Sans", sans-serif;
}
.logo-r {
  justify-content: center;
  width: 11px;
  height: 12px;
  margin-left: 1px;
  background: #1f6fd0;
  color: #fff;
  font-weight: bold;
}
.caption {
  flex: 1;
  padding-bottom: 2px;
  white-space: nowrap;
}
.account {
  display: flex;
  align-items: center;
  gap: 2px;
  margin-right: 26px;
}
.login {
  width: 41px;
  text-align: left;
}
.account .car:not(.left) {
  margin: 0 3px;
}
.help {
  justify-content: center;
  width: 9px;
  height: 9px;
  margin-left: 6px;
  border: 1px solid #555;
  border-radius: 50%;
  color: #2c5f9e;
  font-weight: bold;
}
.winbtns {
  display: flex;
  gap: 3px;
  margin-right: 1px;
}
.winbtns svg {
  width: 8px;
  height: 8px;
}

/* вкладки ленты */
.menu {
  display: flex;
  align-items: stretch;
  gap: 1px;
  height: 12px;
  background: #cbcbcb;
}
.menu button {
  padding: 0 5px;
}
.menu .file {
  width: 25px;
  background: #2a70b8;
  color: #fff;
}
.menu .active {
  padding: 0 4px;
  background: #e5ecd6;
}
.menu .pill {
  align-self: center;
  width: 10px;
  height: 6px;
  margin-left: 8px;
  padding: 0;
  border: 1px solid #666;
  border-radius: 3px;
  background: #eee;
}
.menu .car {
  align-self: center;
}

/* лента */
.ribbon {
  display: flex;
  height: 53px;
  background: #e5ecd6;
}
.panel {
  display: flex;
  flex-direction: column;
  flex: none;
  padding-top: 1px;
  background: #f1f1f1;
}
.panel.ctx .pname {
  background: #e5ecd6;
}
.tools {
  display: flex;
  justify-content: space-around;
  height: 42px;
}
.pname {
  display: flex;
  justify-content: center;
  align-items: center;
  gap: 3px;
  height: 10px;
}
.l {
  width: 18px;
  height: 18px;
}
.s {
  width: 10px;
  height: 10px;
}
.big {
  flex-direction: column;
  gap: 1px;
  padding-top: 2px;
  text-align: center;
}
.off {
  color: #b5b5b5;
}
.big.tall {
  width: 22px;
  gap: 3px;
}
.panel .on {
  background: #a9cff2;
  outline: 1px solid #7fb0de;
  outline-offset: -1px;
}
.g2, .tools.g2 {
  display: grid;
  grid-template-rows: 21px 21px;
  grid-auto-flow: column;
  justify-content: center;
}
.g2 button {
  justify-content: center;
  width: 21px;
}
.g2.wide {
  grid-auto-columns: 22px;
}
.g3 {
  display: grid;
  grid-template-rows: repeat(3, 14px);
  grid-auto-flow: column;
  column-gap: 4px;
}
.g3 button {
  gap: 3px;
}
.p-select { width: 28px; }
.p-props { width: 26px; }
.p-clip { width: 43px; }
.p-geo { width: 95px; }
.p-ctrl { width: 24px; }
.p-modify { width: 134px; }
.p-view { width: 37px; }
.p-measure { width: 31px; }
.p-create { width: 49px; }
.p-mode { width: 45px; }
.p-wall { width: 92px; }
.p-view .g3, .p-view button {
  gap: 1px;
  align-items: center;
}
.p-view .g3 {
  column-gap: 5px;
}
.brand {
  display: flex;
  flex-direction: column;
  justify-content: space-between;
  width: 166px;
  margin: 0 10px 0 auto;
}
.brand-top {
  display: flex;
  align-items: center;
  gap: 8px;
  height: 40px;
  border-bottom: 2px solid #3f9dc2;
}
.brand-mark {
  width: 30px;
  height: 36px;
}
.brand span {
  padding-bottom: 5px;
  background: linear-gradient(#2ba2a8, #2b86cf);
  background-clip: text;
  color: transparent;
  font: bold 30px/33px "Noto Sans CJK SC", sans-serif;
}
.brand p {
  margin: 0;
  color: #111;
  line-height: 10px;
  white-space: nowrap;
}
.options {
  height: 16px;
  padding: 3px 5px;
  border-top: 1px solid #cfd6c2;
  background: #e5ecd6;
  color: #111;
}

/* рабочая область */
.work {
  display: grid;
  grid-template-columns: 145px 1fr 184px;
  flex: 1;
}
.phead {
  display: flex;
  align-items: center;
  justify-content: space-between;
  height: 12px;
  padding: 0 2px;
  background: #f3f3f3;
}
.x svg {
  width: 7px;
  height: 7px;
}
.props {
  display: flex;
  flex-direction: column;
  border-right: 2px solid #d5d5d5;
  background: #f0f0f0;
}
.type {
  gap: 3px;
  height: 41px;
  padding: 0 1px 0 2px;
  text-align: left;
}
.thumb {
  width: 37px;
  height: 36px;
  border: 1px solid #ddd;
  background: linear-gradient(#fff 38%, #b4b4b4 38% 64%, #fff 64%);
}
.tname {
  flex: 1;
}
.inst {
  display: flex;
  gap: 4px;
  height: 14px;
  border-top: 1px solid #ccc;
}
.inst select {
  width: 96px;
  border: 1px solid #c5c5c5;
}
select {
  appearance: none;
  padding-left: 2px;
  background: no-repeat right 4px center / 5px 3px url("data:image/svg+xml,%3Csvg xmlns='http://www.w3.org/2000/svg' viewBox='0 0 10 6'%3E%3Cpath d='M1 1l4 4 4-4' fill='none' stroke='%23777'/%3E%3C/svg%3E");
}
.inst button {
  gap: 2px;
  color: #111;
}
.grid-wrap {
  display: flex;
  flex: 1;
  background: #fff;
}
table {
  width: 134px;
  table-layout: fixed;
  border-collapse: collapse;
  align-self: flex-start;
}
.c1 { width: 63px; }
.c3 { width: 8px; }
tr {
  height: 11px;
}
tr:nth-child(4n) {
  height: 12px;
}
th, td {
  padding: 0;
  border-right: 1px dashed #c4c4c4;
  border-bottom: 1px dashed #c4c4c4;
  color: #222;
  font-weight: normal;
  line-height: 8px;
  text-align: left;
  white-space: nowrap;
}
th {
  padding-left: 6px;
}
.sec th, .sec td {
  padding-left: 1px;
  border-right: 0;
  background: #dadada;
}
.dis th, .dis td {
  color: #999;
}
td input {
  display: block;
  width: 100%;
  height: 9px;
  padding-left: 2px;
}
.focus {
  outline: 1px solid #333;
}
input[type="checkbox"] {
  appearance: none;
  width: 8px;
  height: 8px;
  margin-left: 2px;
  padding: 0;
  border: 1px solid #444;
}
input[type="checkbox"]:checked::after {
  content: "";
  display: block;
  width: 5px;
  height: 2px;
  margin-top: 1px;
  border: solid #333;
  border-width: 0 0 1px 1px;
  transform: rotate(-45deg);
}
input[type="checkbox"]:disabled {
  border-color: #d5d5d5;
}
input[type="checkbox"]:disabled::after {
  border-color: #bbb;
}
td button {
  width: 6px;
  height: 10px;
  border: 1px solid #bbb;
  background: #e5e5e5;
}
.vbar {
  display: flex;
  flex-direction: column;
  align-items: center;
  width: 8px;
  padding: 5px 0;
  background: #f0f0f0;
}
.vbar b {
  width: 100%;
  height: 347px;
  margin: 4px 0 auto;
  background: #cdcdcd;
}
.pfoot {
  display: flex;
  justify-content: space-between;
  height: 15px;
  padding: 1px 0 2px 2px;
  border-top: 1px solid #ddd;
}
.pfoot a {
  color: #1a73c0;
}
.pfoot button {
  justify-content: center;
  width: 43px;
  height: 11px;
  background: #cacaca;
  color: #999;
}

/* документ */
.doc {
  display: flex;
  flex-direction: column;
  border-right: 1px solid #c5c5c5;
}
.tabs {
  display: flex;
  align-items: center;
  height: 12px;
  background: #c8c8c8;
}
.tabs button {
  gap: 3px;
  width: 72px;
  height: 12px;
  padding-left: 3px;
}
.tabs .active {
  background: #fff;
  color: #111;
}
.tabs .close {
  width: 7px;
  height: 7px;
  margin: 0 2px 0 auto;
}
.tabs .car {
  margin: 0 2px 0 auto;
}
.canvas {
  display: flex;
  flex: 1;
  position: relative;
}
.scene {
  flex: 1;
  width: auto;
  height: 100%;
  min-width: 0;
}
.thin path {
  fill: none;
  stroke: #a5a5a5;
  stroke-width: 1;
}
.thin .lvl {
  stroke: #666;
}
.levels text {
  fill: #111;
  font: 22px "Liberation Sans Narrow", "Roboto Condensed", "Liberation Sans", "Noto Sans CJK SC", sans-serif;
}
.h {
  fill: none;
  stroke: #666;
  stroke-width: 2;
}
.grip {
  fill: #7387ac;
  stroke: #3f5f96;
  stroke-width: 2;
}
.len {
  fill: #2456b8;
  font: 18px "Liberation Sans", sans-serif;
}
.cube path {
  stroke: #b5b5b5;
  stroke-width: 2;
}
.cube text {
  fill: #999;
  font: 32px "Noto Sans CJK SC", sans-serif;
}
.cube .dir {
  fill: #888;
  font-size: 20px;
}
.navbar {
  position: absolute;
  top: 97px;
  right: 10px;
  width: 20px;
  height: 66px;
  border: 1px solid #bbb;
  border-radius: 3px;
  background: #f4f4f4;
}
.navbar svg {
  width: 18px;
  height: 64px;
  fill: none;
  stroke: #999;
}
.vbar.main {
  width: 9px;
}
.vbar.main b {
  height: 10px;
  margin: auto 0;
}
.viewbar {
  display: flex;
  align-items: center;
  height: 13px;
  padding: 0 12px 0 13px;
  background: #f2f2f2;
}
.scale {
  width: 12px;
}
.vicons {
  display: flex;
  gap: 2px;
  margin: 0 4px 0 7px;
}
.hbar {
  display: flex;
  flex: 1;
  height: 9px;
}
.hbar b {
  width: 10px;
  margin: 0 auto;
  background: #cdcdcd;
}

/* диспетчер */
.browser {
  position: relative;
  border-left: 1px solid #ddd;
}
.tree {
  margin: 0;
  padding: 0 0 0 4px;
  list-style: none;
  color: #111;
}
.tree li {
  display: flex;
  align-items: center;
  gap: 3px;
  height: 11px;
  white-space: nowrap;
}
.tree li:nth-child(4n) {
  height: 12px;
}
.tree .l1 {
  gap: 7px;
  padding-left: 11px;
}
.tree .l2 {
  padding-left: 31px;
}
.tree b {
  background: #dcdcdc;
}
.ex {
  position: relative;
  width: 5px;
  height: 5px;
  border: 1px solid #bbb;
  background: linear-gradient(#888, #888) center / 3px 1px no-repeat, linear-gradient(#888, #888) center / 1px 3px no-repeat;
}
.ex.m {
  background: linear-gradient(#888, #888) center / 3px 1px no-repeat;
}
.ex.none {
  border-color: transparent;
  background: none;
}
.tree svg {
  width: 9px;
  height: 9px;
}
.ime {
  position: absolute;
  right: 7px;
  bottom: 118px;
  display: flex;
  align-items: center;
  gap: 5px;
  height: 19px;
  border-bottom: 1px solid #eee;
  color: #1668b8;
  font-weight: bold;
}
.ime button {
  justify-content: center;
  width: 9px;
  font-size: 9px;
}
.ime svg {
  width: 9px;
  height: 9px;
}
.sogou {
  width: 16px;
  height: 16px;
  border-radius: 3px;
  background: #e2622c;
  color: #fff;
  font: bold 15px/16px "Liberation Sans", sans-serif;
  text-align: center;
  transform: rotate(-8deg);
}

/* строка состояния */
.status {
  display: flex;
  align-items: center;
  gap: 4px;
  height: 11px;
  background: #cbcbcb;
}
.hint {
  flex: 0 0 49%;
  margin-right: -3px;
  padding-left: 1px;
  color: #111;
}
.status select {
  width: 116px;
  height: 10px;
  background-color: #fff;
}
.status .zero {
  display: flex;
  width: 26px;
}
.sicons {
  display: flex;
  gap: 4px;
  margin: 0 40px 0 auto;
}
```
